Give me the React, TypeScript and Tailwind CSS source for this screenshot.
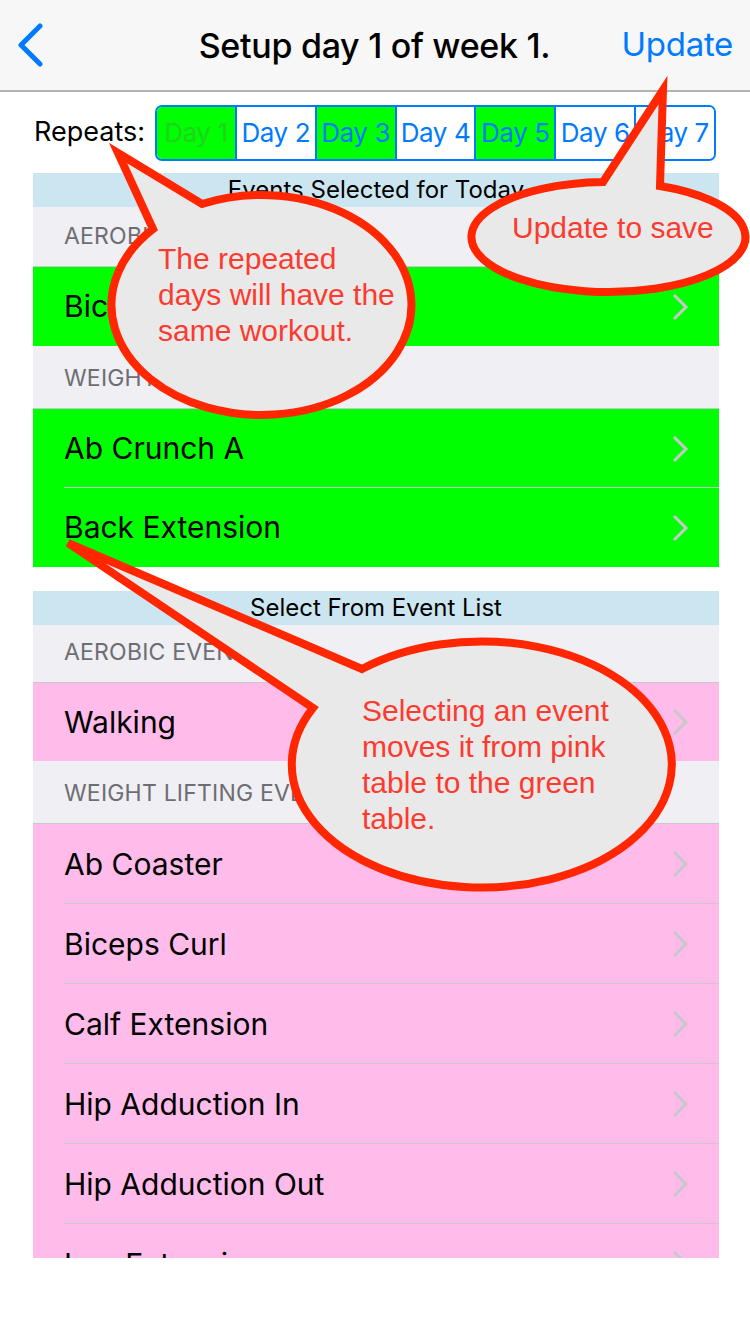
/* ── Data ─────────────────────────────────────────── */

const DAYS = [
  { label: "Day 1", on: true, current: true },
  { label: "Day 2", on: false },
  { label: "Day 3", on: true },
  { label: "Day 4", on: false },
  { label: "Day 5", on: true },
  { label: "Day 6", on: false },
  { label: "Day 7", on: false },
];

const PINK_WEIGHTS = [
  "Ab Coaster",
  "Biceps Curl",
  "Calf Extension",
  "Hip Adduction In",
  "Hip Adduction Out",
  "Leg Extension",
];

/* ── Pieces ───────────────────────────────────────── */

function TableHeader({ title }: { title: string }) {
  return (
    <div className="h-[34px] bg-[#cbe6f0] flex items-center justify-center text-[24px] text-black">
      {title}
    </div>
  );
}

function SectionHeader({ title, h }: { title: string; h: string }) {
  return (
    <div
      className={`${h} bg-[#efeff4] border-b border-[#c8c7cc] flex items-end pb-[13px] pl-[31px] text-[23px] text-[#6d6d72] tracking-[0.2px]`}
    >
      {title}
    </div>
  );
}

function Chevron() {
  return (
    <svg width="18" height="30" viewBox="0 0 18 30" className="shrink-0">
      <path d="M3 3 L15 15 L3 27" fill="none" stroke="#c7c7cc" strokeWidth="3" />
    </svg>
  );
}

function Row({
  label,
  color,
  last,
  h = "h-[79px]",
}: {
  label: string;
  color: string;
  last?: boolean;
  h?: string;
}) {
  return (
    <div className={`${h} ${color} relative flex items-center pl-[31px] pr-[30px]`}>
      <span className="flex-1 text-[30px] text-black">{label}</span>
      <Chevron />
      {!last && (
        <div className="absolute bottom-0 left-[31px] right-0 h-px bg-[#c8c7cc]" />
      )}
    </div>
  );
}

/* ── Callouts ─────────────────────────────────────── */

function Callouts() {
  return (
    <>
      <svg
        className="absolute inset-0 pointer-events-none"
        width={750}
        height={1334}
        viewBox="0 0 750 1334"
      >
        <g fill="#e9e9e9" stroke="#ff2600" strokeWidth={8} strokeLinejoin="miter">
          <path d="M 153 229 L 118 153 L 202 204 A 150 110 0 1 1 153 229 Z" />
          <path d="M 660 186 L 663 90 L 603 182 A 137 55 0 1 0 660 186 Z" />
          <path d="M 362 669 L 68 543 L 313 708 A 190 123 0 1 0 362 669 Z" />
        </g>
      </svg>
      <div className="absolute left-[158px] top-[241px] text-[30px] leading-[36px] text-[#fb3b2f] font-['Liberation_Sans',Arial,sans-serif]">
        The repeated
        <br />
        days will have the
        <br />
        same workout.
      </div>
      <div className="absolute left-[512px] top-[210px] text-[30px] leading-[36px] text-[#fb3b2f] font-['Liberation_Sans',Arial,sans-serif]">
        Update to save
      </div>
      <div className="absolute left-[362px] top-[693px] text-[30px] leading-[36px] text-[#fb3b2f] font-['Liberation_Sans',Arial,sans-serif]">
        Selecting an event
        <br />
        moves it from pink
        <br />
        table to the green
        <br />
        table.
      </div>
    </>
  );
}

/* ── Page ─────────────────────────────────────────── */

export default function App() {
  return (
    <div className="relative w-[750px] h-[1334px] overflow-hidden bg-white font-['Inter',sans-serif]">
      {/* Nav bar */}
      <div className="h-[92px] bg-[#f7f7f7] border-b-2 border-[#b2b2b2] grid grid-cols-[130px_1fr_130px] items-center pl-[16px] pr-[17px]">
        <svg width="30" height="44" viewBox="0 0 30 44">
          <path d="M24 3 L5 22 L24 41" fill="none" stroke="#007aff" strokeWidth="5" strokeLinecap="round" strokeLinejoin="round" />
        </svg>
        <div className="text-center text-[34px] font-medium text-black tracking-[-0.3px] whitespace-nowrap">
          Setup day 1 of week 1.
        </div>
        <div className="text-right text-[33px] text-[#007aff] tracking-[-0.3px]">Update</div>
      </div>

      {/* Repeats */}
      <div className="h-[81px] flex items-center pl-[34px]">
        <span className="w-[121px] text-[27px] text-black">Repeats:</span>
        <div className="flex h-[56px] w-[561px] border-2 border-[#007aff] rounded-[7px] overflow-hidden">
          {DAYS.map((d, i) => (
            <div
              key={d.label}
              className={`flex-1 flex items-center justify-center text-[26px] tracking-[-0.4px] ${
                i > 0 ? "border-l-2 border-[#007aff]" : ""
              } ${d.on ? "bg-[#00ff00]" : "bg-white"} ${
                d.current ? "text-[#1fd41f]" : "text-[#007aff]"
              }`}
            >
              {d.label}
            </div>
          ))}
        </div>
      </div>

      {/* Tables */}
      <div className="ml-[33px] w-[686px] h-[1085px] overflow-hidden">
        <TableHeader title="Events Selected for Today" />
        <SectionHeader title="AEROBIC EVENTS" h="h-[60px]" />
        <Row label="Bicycle" color="bg-[#00ff00]" last />
        <SectionHeader title="WEIGHT LIFTING EVENTS" h="h-[63px]" />
        <Row label="Ab Crunch A" color="bg-[#00ff00]" />
        <Row label="Back Extension" color="bg-[#00ff00]" last />

        <div className="h-[24px] bg-white" />

        <TableHeader title="Select From Event List" />
        <SectionHeader title="AEROBIC EVENTS" h="h-[58px]" />
        <Row label="Walking" color="bg-[#ffbbea]" last h="h-[78px]" />
        <SectionHeader title="WEIGHT LIFTING EVENTS" h="h-[63px]" />
        {PINK_WEIGHTS.map((w, i) => (
          <Row key={w} label={w} color="bg-[#ffbbea]" h="h-[80px]" last={i === PINK_WEIGHTS.length - 1} />
        ))}
      </div>

      <Callouts />
    </div>
  );
}
